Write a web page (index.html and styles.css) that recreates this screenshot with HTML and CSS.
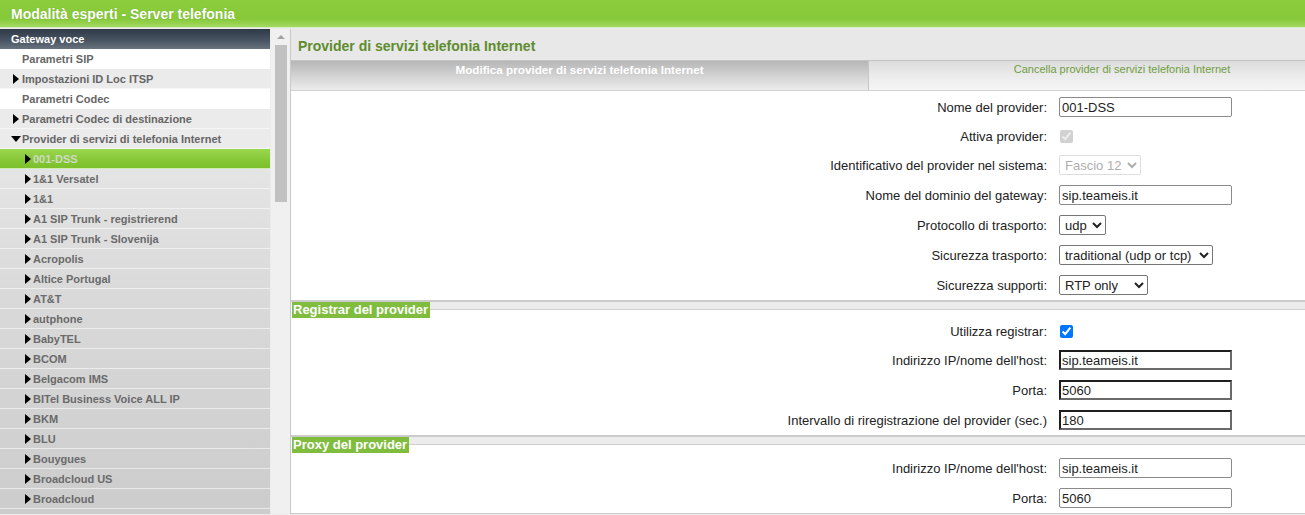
FILE: index.html
```html
<!DOCTYPE html>
<html lang="it">
<head>
<meta charset="utf-8">
<title>Modalità esperti - Server telefonia</title>
<link rel="stylesheet" href="styles.css">
</head>
<body>
<header class="topbar"><span class="topbar-title">Modalità esperti - Server telefonia</span></header>
<div class="layout">
  <nav class="sidebar">
    <div class="group-head">Gateway voce</div>
    <ul class="menu">
      <li class="item lvl1 white">Parametri SIP</li>
      <li class="item lvl1 grey arrow"><i class="tri-r"></i>Impostazioni ID Loc ITSP</li>
      <li class="item lvl1 white">Parametri Codec</li>
      <li class="item lvl1 grey arrow"><i class="tri-r"></i>Parametri Codec di destinazione</li>
      <li class="item lvl1 grey open"><i class="tri-d"></i>Provider di servizi di telefonia Internet</li>
    </ul>
    <ul class="menu sub">
      <li class="item lvl2 selected"><i class="tri-r"></i>001-DSS</li>
      <li class="item lvl2"><i class="tri-r"></i>1&amp;1 Versatel</li>
      <li class="item lvl2"><i class="tri-r"></i>1&amp;1</li>
      <li class="item lvl2"><i class="tri-r"></i>A1 SIP Trunk - registrierend</li>
      <li class="item lvl2"><i class="tri-r"></i>A1 SIP Trunk - Slovenija</li>
      <li class="item lvl2"><i class="tri-r"></i>Acropolis</li>
      <li class="item lvl2"><i class="tri-r"></i>Altice Portugal</li>
      <li class="item lvl2"><i class="tri-r"></i>AT&amp;T</li>
      <li class="item lvl2"><i class="tri-r"></i>autphone</li>
      <li class="item lvl2"><i class="tri-r"></i>BabyTEL</li>
      <li class="item lvl2"><i class="tri-r"></i>BCOM</li>
      <li class="item lvl2"><i class="tri-r"></i>Belgacom IMS</li>
      <li class="item lvl2"><i class="tri-r"></i>BITel Business Voice ALL IP</li>
      <li class="item lvl2"><i class="tri-r"></i>BKM</li>
      <li class="item lvl2"><i class="tri-r"></i>BLU</li>
      <li class="item lvl2"><i class="tri-r"></i>Bouygues</li>
      <li class="item lvl2"><i class="tri-r"></i>Broadcloud US</li>
      <li class="item lvl2"><i class="tri-r"></i>Broadcloud</li>
      <li class="item lvl2"><i class="tri-r"></i></li>
    </ul>
  </nav>
  <div class="scrollbar">
    <div class="scroll-up"><i class="tri-up"></i></div>
    <div class="scroll-thumb"></div>
  </div>
  <main class="main">
    <div class="page-title">Provider di servizi telefonia Internet</div>
    <div class="tabs">
      <div class="tab tab-active">Modifica provider di servizi telefonia Internet</div>
      <div class="tab tab-inactive">Cancella provider di servizi telefonia Internet</div>
    </div>
    <div class="form">
      <div class="row row-first"><label class="lbl">Nome del provider:</label><div class="fld"><input class="txt" type="text" value="001-DSS"></div></div>
      <div class="row row-short"><label class="lbl">Attiva provider:</label><div class="fld"><input class="chk" type="checkbox" checked disabled></div></div>
      <div class="row"><label class="lbl">Identificativo del provider nel sistema:</label><div class="fld"><select class="sel sel-fascio" disabled><option>Fascio 12</option></select></div></div>
      <div class="row"><label class="lbl">Nome del dominio del gateway:</label><div class="fld"><input class="txt" type="text" value="sip.teameis.it"></div></div>
      <div class="row"><label class="lbl">Protocollo di trasporto:</label><div class="fld"><select class="sel sel-udp"><option>udp</option></select></div></div>
      <div class="row"><label class="lbl">Sicurezza trasporto:</label><div class="fld"><select class="sel sel-trad"><option>traditional (udp or tcp)</option></select></div></div>
      <div class="row"><label class="lbl">Sicurezza supporti:</label><div class="fld"><select class="sel sel-rtp"><option>RTP only</option></select></div></div>

      <div class="section-head"><span class="legend">Registrar del provider</span><span class="legend-rule"></span></div>
      <div class="row row-short2"><label class="lbl">Utilizza registrar:</label><div class="fld"><input class="chk" type="checkbox" checked></div></div>
      <div class="row"><label class="lbl">Indirizzo IP/nome dell'host:</label><div class="fld"><input class="txt txt-dark" type="text" value="sip.teameis.it"></div></div>
      <div class="row"><label class="lbl">Porta:</label><div class="fld"><input class="txt txt-dark" type="text" value="5060"></div></div>
      <div class="row"><label class="lbl">Intervallo di riregistrazione del provider (sec.)</label><div class="fld"><input class="txt txt-dark" type="text" value="180"></div></div>

      <div class="section-head"><span class="legend">Proxy del provider</span><span class="legend-rule"></span></div>
      <div class="row"><label class="lbl">Indirizzo IP/nome dell'host:</label><div class="fld"><input class="txt" type="text" value="sip.teameis.it"></div></div>
      <div class="row"><label class="lbl">Porta:</label><div class="fld"><input class="txt" type="text" value="5060"></div></div>
      <div class="section-end"></div>
    </div>
  </main>
</div>
</body>
</html>
```
FILE: styles.css
```css
* { box-sizing: border-box; }
html, body { margin: 0; padding: 0; height: 100%; overflow: hidden; }
body {
  font-family: "Liberation Sans", Arial, sans-serif;
  background: #ececec;
  color: #222;
}

.topbar {
  height: 28px;
  background: linear-gradient(#8ccd3d, #86c938 70%, #a2d962);
  border-bottom: 1px solid #d9ecc4;
  display: flex;
  align-items: center;
  padding-left: 11px;
}
.topbar-title {
  color: #fff;
  font-weight: bold;
  font-size: 14px;
  text-shadow: 0 0 1px rgba(60, 100, 20, .4);
}

.layout {
  display: flex;
  margin-top: 1px;
  height: calc(100% - 30px);
}

/* Sidebar */
.sidebar {
  width: 270px;
  flex: none;
  overflow: hidden;
  background: #cfcfcf;
}
.group-head {
  height: 20px;
  line-height: 20px;
  padding-left: 11px;
  color: #fff;
  font-weight: bold;
  font-size: 11px;
  background: linear-gradient(#2d3946, #4a5663 60%, #68737e);
}
.menu { list-style: none; margin: 0; padding: 0; }
.item {
  height: 20px;
  line-height: 19px;
  padding-top: 1px;
  font-size: 11px;
  font-weight: bold;
  color: #6a6a6a;
  white-space: nowrap;
  border-bottom: 1px solid rgba(255, 255, 255, .55);
  display: flex;
  align-items: center;
}
.lvl1 { padding-left: 22px; color: #666; }
.lvl1.white { background: #fff; border-bottom-color: #fff; }
.lvl1.grey { background: #ebebeb; border-bottom-color: #f6f6f6; }
.lvl1.arrow { padding-left: 13px; }
.lvl1.open { padding-left: 11px; }
.lvl2 { padding-left: 25px; }
.sub {
  background: linear-gradient(#e6e6e6, #d9d9d9 40%, #cbcbcb);
}
.selected {
  background: linear-gradient(#9ad74f, #85c735 60%, #7cc02c);
  color: #cfd9c6;
}
.tri-r {
  display: inline-block;
  flex: none;
  width: 0; height: 0;
  border-left: 6px solid #000;
  border-top: 5px solid transparent;
  border-bottom: 5px solid transparent;
  margin-right: 3px;
}
.lvl2 .tri-r { margin-right: 2px; }
.tri-d {
  display: inline-block;
  flex: none;
  width: 0; height: 0;
  border-top: 6px solid #000;
  border-left: 5px solid transparent;
  border-right: 5px solid transparent;
  margin-right: 1px;
}

/* Scrollbar */
.scrollbar {
  width: 20px;
  flex: none;
  margin-left: 1px;
  background: #f0f0f0;
  border-right: 1px solid #c9c9c9;
  display: flex;
  flex-direction: column;
  align-items: center;
}
.scroll-up { height: 16px; flex: none; display: flex; align-items: center; justify-content: center; }
.tri-up {
  width: 0; height: 0;
  border-bottom: 4px solid #a3a3a3;
  border-left: 4px solid transparent;
  border-right: 4px solid transparent;
}
.scroll-thumb {
  flex: none;
  width: 12px;
  height: 157px;
  background: #c1c1c1;
}

/* Main */
.main {
  flex: 1;
  min-width: 0;
  background: #fff;
  display: flex;
  flex-direction: column;
  overflow: hidden;
}
.main > * { flex: none; }
.page-title {
  height: 31px;
  background: #e8e8e8;
  color: #5e8c2c;
  font-weight: bold;
  font-size: 14px;
  padding: 9px 0 0 7px;
}
.tabs {
  height: 31px;
  display: flex;
  border-top: 1px solid #c4c4c4;
  border-bottom: 1px solid #d0d0d0;
}
.tab {
  text-align: center;
  padding-top: 2px;
  white-space: nowrap;
}
.tab-active {
  width: 577px;
  font-size: 11.7px;
  background: linear-gradient(#b6b6b6, #d2d2d2 50%, #ececec);
  color: #fff;
  font-weight: bold;
}
.tab-inactive {
  flex: 1;
  font-size: 11px;
  padding-left: 70px;
  background: linear-gradient(#dcdcdc, #ebebeb 50%, #f5f5f5);
  border-left: 1px solid #c6c6c6;
  color: #6f9e42;
}

.form { background: #fff; }
.row {
  display: grid;
  grid-template-columns: 756px 1fr;
  column-gap: 12px;
  align-items: center;
  height: 30px;
}
.row-first { height: 32px; }
.row-short { height: 27px; }
.row-short2 { height: 27px; }
.lbl {
  text-align: right;
  font-size: 13px;
  color: #222;
  white-space: nowrap;
}
.fld { display: flex; align-items: center; }
.txt {
  width: 173px;
  height: 20px;
  margin: 0;
  padding: 0 2px;
  font: 13px "Liberation Sans", Arial, sans-serif;
  color: #222;
  border: 1px solid #8a8a8a;
  border-radius: 2px;
  background: #fff;
}
.txt-dark {
  border: 2px solid;
  border-color: #1e1e1e #6a6a6a #6a6a6a #1e1e1e;
  border-radius: 0;
  padding: 0 1px;
}
.chk { margin: 0 0 0 1px; width: 13px; height: 13px; }
.sel {
  height: 20px;
  margin: 0;
  font: 13px "Liberation Sans", Arial, sans-serif;
  color: #222;
  border: 1px solid #767676;
  border-radius: 2px;
  background: #fff;
  padding: 0 0 0 1px;
}
.sel:disabled { color: #8c8c8c; border-color: #cfcfcf; }
.sel-fascio { width: 82px; }
.sel-udp { width: 47px; }
.sel-trad { width: 154px; }
.sel-rtp { width: 89px; }

.section-head {
  height: 18px;
  display: flex;
  align-items: flex-start;
  border-top: 2px solid #cbcbcb;
}
.legend {
  background: #80bd3f;
  color: #fff;
  font-weight: bold;
  font-size: 13px;
  line-height: 16px;
  padding: 0 2px 0 1px;
  margin-left: 1px;
}
.legend-rule {
  flex: 1;
  height: 8px;
  background: #ececec;
  border-bottom: 1px solid #cfcfcf;
}
.section-end { border-top: 2px solid #cbcbcb; height: 10px; }
```
